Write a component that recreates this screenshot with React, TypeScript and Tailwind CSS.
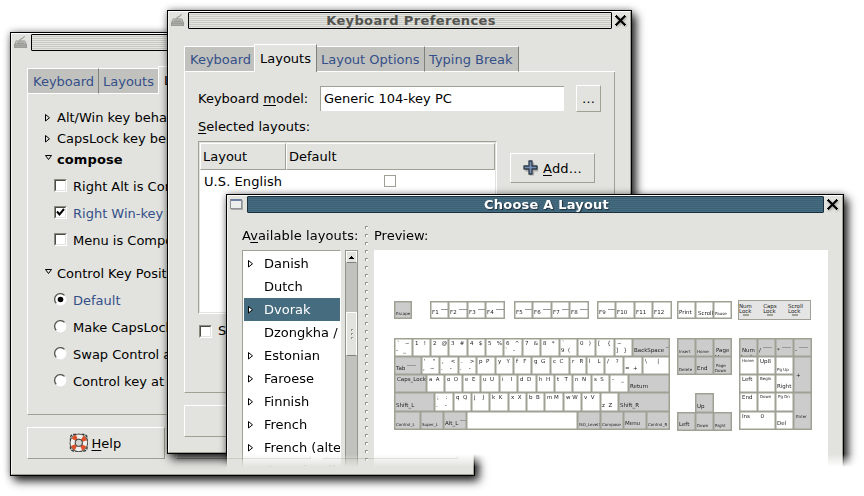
import type { ReactNode } from "react";

const FONT = "font-['DejaVu_Sans',sans-serif]";
const RAISED = "border border-t-white border-l-white border-r-[#a0a194] border-b-[#a0a194]";

function KeyboardIcon() {
  return (
    <svg width="15" height="14" viewBox="0 0 15 14">
      <path d="M7.500 6 C5 3.500 11 4.500 11.500 1" fill="none" stroke="#a0a19c" strokeWidth="1.200" />
      <path d="M3 5.500h9l2 4.500v3H1v-3z" fill="#8f908b" />
      <path d="M3.500 6h8l1.300 3.500H2.200z" fill="#c3c4c0" />
      <path d="M4 7h7M3.500 8.500h8" stroke="#85867f" strokeWidth="0.700" />
      <path d="M1.500 10.500h12v2h-12z" fill="#a9aaa6" />
    </svg>
  );
}

function WindowIcon() {
  return (
    <svg width="15" height="14" viewBox="0 0 15 14" shapeRendering="crispEdges">
      <rect x="2" y="3" width="12" height="10" fill="#a9aaa8" />
      <rect x="1" y="2" width="12" height="10" fill="#8e9195" />
      <rect x="2" y="4" width="10" height="7" fill="#eceded" />
      <rect x="2" y="2" width="10" height="2" fill="#6d7fa0" />
    </svg>
  );
}

function CloseIcon() {
  return (
    <svg width="12" height="12" viewBox="0 0 12 12" className="drop-shadow-[1px_1px_1px_rgba(0,0,0,0.3)]">
      <path d="M1.500 1.500l8 8M9.500 1.500l-8 8" stroke="#000" strokeWidth="2.200" />
      <path d="M0 1h2v1H0zM1 0h1v1H1zM9 0h1v1H9zM9 1h2v1H9zM0 9h2v1H0zM1 10h1v1H1zM9 9h2v1H9zM9 10h1v1H9z" fill="#000" shapeRendering="crispEdges" />
    </svg>
  );
}

function Window({ title, icon, active, className, children }: { title?: string; icon: ReactNode; active?: boolean; className: string; children: ReactNode }) {
  return (
    <div className={`flex flex-col border border-black bg-[#e2e3de] shadow-[4px_5px_9px_rgba(0,0,0,0.85),0_0_7px_rgba(0,0,0,0.35)] ${className}`}>
      <div className="flex min-h-0 flex-1 flex-col border border-t-white border-l-[#f4f4f2] border-r-[#a0a194] border-b-[#a0a194]">
        <div className="flex h-[17px] shrink-0">
          <div className="w-[19px] shrink-0 pl-px pt-px">{icon}</div>
          <div
            className={`flex flex-1 items-center justify-center rounded-[1px] border pl-[22px] text-[13px] leading-[15px] font-bold ${
              active
                ? "border-[#1c303c] bg-[repeating-linear-gradient(#466c81_0px_1px,#3c6074_1px_2px)] tracking-[0.2px] text-white [text-shadow:1px_1px_1px_#1c303c]"
                : "border-black bg-[repeating-linear-gradient(#e4e5e0_0px_1px,#c9cac4_1px_2px)] tracking-[0.36px] text-[#53544f]"
            }`}
          >
            {title}
          </div>
          <div className="w-[18px] shrink-0 pl-[3px] pt-[3px]">
            <CloseIcon />
          </div>
        </div>
        {children}
      </div>
    </div>
  );
}

function Tab({ label, className, first, last }: { label: string; className: string; first?: boolean; last?: boolean }) {
  return (
    <div
      className={`mt-[2px] flex shrink-0 items-center whitespace-nowrap border-y border-y-white bg-[#c1c2bd] pt-[2px] text-[#344f8a] ${first ? "border-l border-l-white pl-[5px]" : "pl-1"} ${
        last ? "border-r border-r-[#80817a]" : ""
      } ${className}`}
    >
      {label}
    </div>
  );
}

function Expander({ open, filled }: { open?: boolean; filled?: boolean }) {
  return open ? (
    <svg width="8" height="6" viewBox="0 0 8 6" className="mb-[3px] shrink-0">
      <path d="M0.500 0.500h6l-3 4z" fill="#e2e3de" stroke="#000" />
    </svg>
  ) : (
    <svg width="6" height="8" viewBox="0 0 6 8" className="shrink-0">
      <path d="M0.500 0.500v6.500l4-3.200z" fill={filled ? "#fff" : "#e2e3de"} stroke="#000" />
    </svg>
  );
}

function CheckBox({ checked }: { checked?: boolean }) {
  return (
    <span className="flex size-[13px] shrink-0 border border-t-[#8b8c80] border-l-[#8b8c80] border-r-white border-b-white bg-white">
      <span className="size-[11px] border border-t-[#4b4c46] border-l-[#4b4c46] border-r-[#e2e3de] border-b-[#e2e3de]">
        {checked && (
          <svg width="9" height="9" viewBox="0 0 9 9">
            <path d="M1 3.500l2.500 3L8 1" fill="none" stroke="#000" strokeWidth="2" />
          </svg>
        )}
      </span>
    </span>
  );
}

function Radio({ checked }: { checked?: boolean }) {
  return (
    <svg width="13" height="13" viewBox="0 0 13 13" className="shrink-0">
      <circle cx="6.500" cy="6.500" r="5.500" fill="#fff" stroke="#fff" />
      <path d="M2.200 10.300A5.500 5.500 0 0 1 10.500 2.400" fill="none" stroke="#55564f" strokeWidth="1.300" />
      {checked && <circle cx="6.500" cy="6.500" r="2.800" fill="#000" />}
    </svg>
  );
}

function Group({ label, open, bold }: { label: string; open?: boolean; bold?: boolean }) {
  return (
    <div className={`flex h-[21px] items-center ${bold ? "font-bold tracking-[0.1px]" : ""}`}>
      <span className="flex w-[12px]">
        <Expander open={open} />
      </span>
      <span>{label}</span>
    </div>
  );
}

function Option({ label, radio, on }: { label: string; radio?: boolean; on?: boolean }) {
  return (
    <div className={`flex h-[27px] items-center pl-[9px] ${on ? "text-[#344f8a]" : ""}`}>
      <span className="mb-[2px] flex">{radio ? <Radio checked={on} /> : <CheckBox checked={on} />}</span>
      <span className="pl-[6px]">{label}</span>
    </div>
  );
}

function LifeRing() {
  return (
    <svg width="20" height="20" viewBox="0 0 20 20">
      <rect x="1.500" y="1.500" width="16.500" height="16.500" rx="3" fill="none" stroke="#3a3a38" strokeWidth="1.400" strokeDasharray="3 1" />
      <circle cx="9.800" cy="9.800" r="6.200" fill="none" stroke="#3f403b" strokeWidth="5.800" />
      <circle cx="9.800" cy="9.800" r="6.200" fill="none" stroke="#f0f0ee" strokeWidth="4.400" />
      <circle cx="9.800" cy="9.800" r="6.200" fill="none" stroke="#e0512a" strokeWidth="4.400" strokeDasharray="4 5.740" strokeDashoffset="-2.870" />
      <circle cx="9.800" cy="9.800" r="3.600" fill="#d5d6d1" stroke="#444540" strokeWidth="1" />
    </svg>
  );
}

function PlusIcon() {
  return (
    <svg width="16" height="16" viewBox="0 0 16 16">
      <path d="M6.500 2.500h3v4h4v3h-4v4h-3v-4h-4v-3h4z" transform="translate(0.700 0.900)" fill="#aaaba6" stroke="#aaaba6" strokeWidth="2" strokeLinejoin="round" />
      <path d="M6 1h3v5h5v3H9v5H6V9H1V6h5z" fill="#7590b5" stroke="#2f3a48" strokeWidth="1.300" strokeLinejoin="round" />
    </svg>
  );
}

/* ---- keyboard preview ---- */

type KeyDef = { w?: number; top?: string; bot?: string; gray?: boolean; tiny?: boolean; dash?: boolean; span?: string };

function Key({ k, fill }: { k: KeyDef; fill?: boolean }) {
  return (
    <div
      style={fill ? undefined : { width: k.w ?? 18 }}
      className={`flex shrink-0 flex-col justify-between overflow-hidden whitespace-pre border-r border-b border-[#a0a194] pl-[1px] text-[#222] shadow-[inset_0_0_0_0.500px_#a0a194] ${k.gray ? "bg-[#cccccc]" : "bg-white"} ${
        k.tiny ? "text-[4px] leading-[5px]" : "text-[5.500px] leading-[7px]"
      } ${k.span ?? ""}`}
    >
      {k.top ? <span className="pl-[1px] pt-px">{k.top}</span> : <span />}
      <span className="flex pb-[2px]">
        {k.bot ?? ""}
        {k.dash && <i className="mb-[5px] ml-[2px] h-px w-[9px] self-start bg-[#999]" />}
      </span>
    </div>
  );
}

function KeyRow({ keys, className }: { keys: KeyDef[]; className: string }) {
  return (
    <div className={`flex border-l border-[#a0a194] ${className}`}>
      {keys.map((k, i) => (
        <Key key={i} k={k} />
      ))}
    </div>
  );
}

const pairs = (list: string[], widths: number[]): KeyDef[] =>
  list.map((s, i) => {
    const [top, bot] = s.split("¦");
    return { top, bot, w: widths[i] };
  });

const ROW1: KeyDef[] = [
  ...pairs(["`   ~¦-   _", "1   !", "2   @", "3   #", "4   $", "5   %", "6   ^¦`   -", "7   &", "8   *", "`¦9  (", "0   )", "[    {", "~¦]   }"], [18, 18, 18, 19, 18, 18, 19, 18, 19, 18, 18, 19, 18]),
  { w: 37, bot: "BackSpace", gray: true, dash: true },
];
const ROW2: KeyDef[] = [
  { w: 27, bot: "Tab", gray: true, dash: true },
  ...pairs(["'    \"¦,   ~", ",    <¦.    -", ".    >¦.    -", "p  P", "y   Y", "f   F", "g  G", "c  C", "r   R", "l    L", "/    ?", "¦=  +", "\\      |"], [18, 19, 18, 19, 18, 18, 19, 19, 17, 18, 19, 19, 27]),
];
const ROW3: KeyDef[] = [
  { w: 32, top: "Caps_Lock", gray: true },
  ...pairs(["a  A", "o  O", "e  E", "u  U", "i    I", "d  D", "h  H", "t   T", "n  N", "s  S", "-    _"], [18, 18, 18, 19, 18, 19, 18, 18, 19, 18, 19]),
  { w: 41, bot: "Return", gray: true },
];
const ROW4: KeyDef[] = [
  { w: 40, bot: "Shift_L", gray: true },
  ...pairs([";    :¦.    -", "q  Q", "j    J", "k  K", "x  X", "b  B", "m M", "w W", "v  V", "¦z  Z"], [19, 18, 18, 19, 18, 18, 19, 18, 19, 18]),
  { w: 51, bot: "Shift_R", gray: true },
];
const ROW5: KeyDef[] = [
  { w: 26, bot: "Control_L", gray: true, tiny: true },
  { w: 23, bot: "Super_L", gray: true, tiny: true },
  { w: 23, bot: "Alt_L", gray: true, dash: true },
  { w: 111 },
  { w: 23, bot: "ISO_Level3", gray: true, tiny: true },
  { w: 23, bot: "Compose", gray: true, tiny: true },
  { w: 23, bot: "Menu", gray: true },
  { w: 23, bot: "Control_R", gray: true, tiny: true },
];
const fkeys = (from: number): KeyDef[] => [0, 1, 2, 3].map((i) => ({ w: i % 2 ? 19 : 18, bot: `F${from + i}`, dash: from + i < 10 }));

const NUMPAD: KeyDef[] = [
  { top: "\nNum", bot: "Lock", gray: true },
  { bot: "/", gray: true, dash: true },
  { bot: "*", gray: true, dash: true },
  { bot: "-", gray: true, dash: true },
  { top: "Home", tiny: true },
  { top: "Up8" },
  { bot: "Pg Up", tiny: true },
  { top: "\n\n+", gray: true, span: "row-span-2" },
  { top: "Left" },
  { top: "Begin", tiny: true },
  { bot: "Right" },
  { top: "End" },
  { top: "Down", tiny: true },
  { top: "Pg Dn", tiny: true },
  { top: "\n\n\n\nEnter", gray: true, tiny: true, span: "row-span-2" },
  { top: "Ins      0", span: "col-span-2" },
  { bot: "Del" },
];

function Keyboard() {
  return (
    <div className="flex pl-[20px] pt-[50px]">
      <div className="w-[283px] shrink-0">
        <div className="flex h-[19px] pt-px">
          <KeyRow className="w-[18px] border-t" keys={[{ w: 17, bot: "Escape", gray: true, tiny: true }]} />
          <KeyRow className="ml-[18px] border-t" keys={fkeys(1)} />
          <KeyRow className="ml-[9px] border-t" keys={fkeys(5)} />
          <KeyRow className="ml-[8px] border-t" keys={fkeys(9)} />
        </div>
        <div className="mt-[19px] w-[276px] border-t border-[#a0a194]">
          <KeyRow className="h-[18px]" keys={ROW1} />
          <KeyRow className="h-[18px]" keys={ROW2} />
          <KeyRow className="h-[18px]" keys={ROW3} />
          <KeyRow className="h-[19px]" keys={ROW4} />
          <KeyRow className="h-[18px]" keys={ROW5} />
        </div>
      </div>
      <div className="w-[61px] shrink-0">
        <div className="flex h-[19px] pt-px">
          <KeyRow className="border-t" keys={[{ bot: "Print" }, { top: "\nScroll", bot: "Lock" }, { bot: "Pause", tiny: true }]} />
        </div>
        <div className="mt-[19px] w-[55px] border-t border-[#a0a194]">
          <KeyRow className="h-[18px]" keys={[{ bot: "Insert", gray: true, tiny: true }, { bot: "Home", gray: true, tiny: true }, { top: "\nPage", bot: "Up", gray: true }]} />
          <KeyRow className="h-[18px]" keys={[{ bot: "Delete", gray: true, tiny: true }, { bot: "End", gray: true }, { top: "\nPage", bot: "Down", gray: true, tiny: true }]} />
        </div>
        <div className="mt-[18px] ml-[18px] w-[19px] border-t border-[#a0a194]">
          <KeyRow className="h-[19px]" keys={[{ bot: "Up", gray: true }]} />
        </div>
        <div className="-mt-px w-[55px] border-t border-[#a0a194]">
          <KeyRow className="h-[18px]" keys={[{ bot: "Left", gray: true }, { bot: "Down", gray: true, tiny: true }, { bot: "Right", gray: true, tiny: true }]} />
        </div>
      </div>
      <div className="w-[74px] shrink-0">
        <div className="flex h-[20px] w-[73px] justify-between border border-[#a0a194] bg-[#e5e5e5] pr-[7px] text-[5.500px] leading-[5px] text-[#222]">
          {["Num", "Caps", "Scroll"].map((n) => (
            <div key={n} className="pt-[3px]">
              {n}
              <br />
              Lock
              <div className="ml-1 h-[2px] w-[6px] bg-[#a0a194]" />
            </div>
          ))}
        </div>
        <div className="mt-[18px] ml-px grid grid-cols-[18px_18px_18px_18px] grid-rows-[18px_18px_18px_19px_18px] border-t border-l border-[#a0a194]">
          {NUMPAD.map((k, i) => (
            <Key key={i} k={k} fill />
          ))}
        </div>
      </div>
    </div>
  );
}

const LAYOUTS: [string, boolean][] = [
  ["Danish", true],
  ["Dutch", false],
  ["Dvorak", true],
  ["Dzongkha / Tibetan", false],
  ["Estonian", true],
  ["Faroese", true],
  ["Finnish", true],
  ["French", true],
  ["French (alternative)", true],
  ["Georgian (latin)", false],
];

export default function App() {
  return (
    <div className={`relative h-[496px] w-[864px] overflow-hidden bg-white text-[13px] leading-[16px] text-black ${FONT}`}>
      {/* layout options window */}
      <Window icon={<KeyboardIcon />} className="absolute top-[32px] left-[10px] h-[444px] w-[465px]">
        <div className="flex flex-1 flex-col whitespace-nowrap px-[15px] pt-[15px]">
          <div className="flex h-[28px] shrink-0">
            <Tab label="Keyboard" className="w-[72px]" first last />
            <Tab label="Layouts" className="w-[59px]" />
            <div className="flex w-[110px] shrink-0 items-center border-t border-l border-white pl-[5px]">Layout Options</div>
            <div className="flex-1 border-b border-white" />
          </div>
          <div className="h-[321px] shrink-0 border-x border-b border-l-white border-r-[#a0a194] border-b-[#a0a194] pt-[13px] pl-[17px]">
            <Group label="Alt/Win key behavior" />
            <Group label="CapsLock key behavior" />
            <Group label="compose" open bold />
            <div className="pt-[3px] pb-[9px]">
              <Option label="Right Alt is Compose." />
              <Option label="Right Win-key is Compose." on />
              <Option label="Menu is Compose." />
            </div>
            <Group label="Control Key Position" open />
            <div className="pt-[3px]">
              <Option radio label="Default" on />
              <Option radio label="Make CapsLock an additional Control." />
              <Option radio label="Swap Control and CapsLock." />
              <Option radio label="Control key at left of 'A'" />
            </div>
          </div>
          <div className="mt-[12px] flex h-[32px] shrink-0 gap-[11px]">
            <div className={`flex flex-1 items-center justify-center pr-[2px] ${RAISED}`}>
              <LifeRing />
              <span className="pt-px pl-[3px]">
                <u className="underline-offset-2">H</u>elp
              </span>
            </div>
            <div className={`flex-1 ${RAISED}`} />
            <div className={`flex-1 ${RAISED}`} />
          </div>
        </div>
      </Window>

      {/* keyboard preferences window */}
      <Window
        title="Keyboard Preferences"
        icon={<KeyboardIcon />}
        className="absolute top-[10px] left-[167px] h-[444px] w-[465px] [clip-path:polygon(-20px_-20px,500px_-20px,500px_200px,59px_200px,59px_480px,-20px_480px)]"
      >
        <div className="flex flex-1 flex-col whitespace-nowrap px-[15px] pt-[15px]">
          <div className="flex h-[28px] shrink-0">
            <Tab label="Keyboard" className="w-[70px]" first />
            <div className="flex w-[63px] shrink-0 items-center justify-center border-t border-x border-white border-r-[#80817a]">Layouts</div>
            <Tab label="Layout Options" className="w-[108px]" last />
            <Tab label="Typing Break" className="w-[94px]" last />
            <div className="flex-1 border-b border-white" />
          </div>
          <div className="h-[321px] shrink-0 border-x border-b border-l-white border-r-[#a0a194] border-b-[#a0a194] pt-[13px] pl-[13px]">
            <div className="flex h-[27px] items-center">
              <span className="w-[122px]">
                Keyboard <u className="underline-offset-2">m</u>odel:
              </span>
              <div className="flex h-[25px] w-[244px] items-center border-t border-l border-[#a0a194] bg-white pl-[3px]">Generic 104-key PC</div>
              <div className={`ml-[12px] flex h-[27px] w-[25px] items-center justify-center pt-px ${RAISED}`}>…</div>
            </div>
            <div className="h-[29px] leading-[29px]">
              <u className="underline-offset-2">S</u>elected layouts:
            </div>
            <div className="flex items-start">
              <div className="h-[173px] w-[299px] border border-t-[#a0a194] border-l-[#a0a194] border-r-white border-b-white bg-white">
                <div className="h-full border border-[#e2e3de]">
                  <div className="flex h-[27px]">
                    <div className={`flex w-[86px] items-center bg-[#e2e3de] pl-[2px] ${RAISED}`}>Layout</div>
                    <div className={`flex flex-1 items-center bg-[#e2e3de] pl-[2px] ${RAISED}`}>Default</div>
                  </div>
                  <div className="flex h-[23px] items-center pl-[4px]">
                    <span className="w-[180px] tracking-[0.08px]">U.S. English</span>
                    <span className="mb-px size-[12px] border border-[#a0a194] bg-white" />
                  </div>
                </div>
              </div>
              <div className={`mt-[12px] ml-[13px] flex h-[30px] w-[85px] items-center pl-[12px] ${RAISED}`}>
                <PlusIcon />
                <span className="pt-px pl-[4px] tracking-[0.2px]">
                  <u className="underline-offset-2">A</u>dd…
                </span>
              </div>
            </div>
            <div className="flex items-center pt-[9px] pl-px">
              <CheckBox />
              <span className="pl-[6px]">Separate group for each window</span>
            </div>
          </div>
          <div className="mt-[12px] flex h-[32px] shrink-0 gap-[11px]">
            <div className={`flex-1 ${RAISED}`} />
            <div className={`flex-1 ${RAISED}`} />
            <div className={`flex-1 ${RAISED}`} />
          </div>
        </div>
      </Window>

      {/* layout chooser, fading out along its lower edge */}
      <div className="absolute top-[184px] left-[216px] h-[283px] w-[648px] overflow-hidden pt-[10px] pl-[10px] [mask-image:linear-gradient(#000_270px,transparent_283px)]">
        <Window title="Choose A Layout" icon={<WindowIcon />} active className="h-[310px] w-[618px]">
          <div className="flex flex-1 whitespace-nowrap pl-[14px]">
            <div className="w-[117px] shrink-0">
              <div className="h-[37px] pt-[15px] tracking-[0.1px]">
                A<u className="underline-offset-2">v</u>ailable layouts:
              </div>
              <div className="flex h-[250px]">
                <div className="w-[99px] overflow-hidden border border-t-[#a0a194] border-l-[#a0a194] border-r-white border-b-white bg-white pt-px pl-px">
                  {LAYOUTS.map(([name, branch]) => (
                    <div key={name} className={`flex h-[23px] items-center pl-[4px] ${name === "Dvorak" ? "bg-[#466c80] text-white" : ""}`}>
                      <span className="flex w-[16px] shrink-0">{branch && <Expander filled />}</span>
                      {name}
                    </div>
                  ))}
                </div>
                <div className="ml-[4px] w-[13px] border border-[#93948a] bg-[#c1c2bd]">
                  <div className="flex h-[12px] items-center justify-center border border-white border-b-[#80817a] bg-[#e2e3de]">
                    <svg width="5" height="3" viewBox="0 0 5 3" shapeRendering="crispEdges">
                      <path d="M2 0h1v1h1v1h1v1H0V2h1V1h1z" fill="#000" />
                    </svg>
                  </div>
                  <div className="mt-[49px] flex h-[44px] flex-col items-center justify-center gap-[2px] border border-white border-b-[#80817a] bg-[#e2e3de]">
                    {[0, 1, 2].map((i) => (
                      <span key={i} className="size-[2px] border-t border-l border-[#93948a] bg-white" />
                    ))}
                  </div>
                </div>
              </div>
            </div>
            <div className="flex w-[15px] shrink-0 flex-col gap-[5px] pt-[13px] pl-[6px]">
              {Array.from({ length: 31 }, (_, i) => (
                <span key={i} className="size-[3px] shrink-0 border-t border-l border-[#93948a] bg-white" />
              ))}
            </div>
            <div className="w-[454px] shrink-0">
              <div className="h-[37px] pt-[15px]">Preview:</div>
              <div className="h-[250px] bg-white">
                <Keyboard />
              </div>
            </div>
          </div>
        </Window>
      </div>
    </div>
  );
}
